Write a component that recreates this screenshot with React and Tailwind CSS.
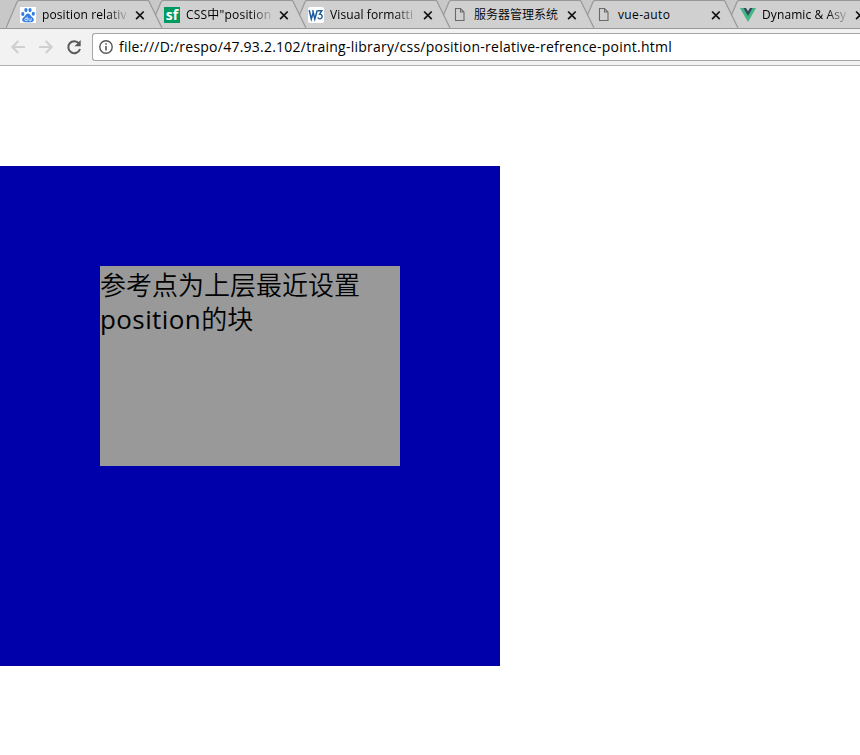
import React from "react";

function BaiduIcon() {
  return (
    <svg width="16" height="16" viewBox="0 0 16 16">
      <rect width="16" height="16" fill="#fff" />
      <g fill="#2f7de8">
        <ellipse cx="2.8" cy="7" rx="1.6" ry="2" />
        <ellipse cx="5.9" cy="3.1" rx="1.600" ry="2.1" />
        <ellipse cx="10" cy="3.1" rx="1.600" ry="2.1" />
        <ellipse cx="13.3" cy="6.8" rx="1.600" ry="2" />
        <path d="M8 6.6c1.6 0 2.2 1.5 3.4 2.8 1.2 1.2 2.6 1.9 2.4 3.7-.2 1.6-1.6 2.2-3 2.1H5.2c-1.4 0-2.8-.6-3-2.1-.2-1.800 1.200-2.500 2.400-3.700C5.800 8.100 6.400 6.600 8 6.600z" />
      </g>
      <path d="M7.200 9.500v4.200H6a1.200 1.200 0 0 1 0-2.500h1M8.900 11v2.100q0 .6.700.6h1.500V11" fill="none" stroke="#fff" strokeWidth=".8" />
    </svg>
  );
}

function SfIcon() {
  return (
    <div className="flex h-4 w-4 items-center justify-center bg-[#009a61] font-['Open_Sans','Noto_Sans',sans-serif] text-[14px] leading-4 font-bold text-white">
      sf
    </div>
  );
}

function W3Icon() {
  return (
    <div className="flex h-4 w-4 items-center justify-center rounded-[2px] bg-white">
      <svg width="16" height="16" viewBox="0 0 16 16" fill="none" stroke="#1c5c9c">
        <path d="M1.200 3.200 3.300 12 5.300 5M4.700 3.200 6.800 12 9.300 3.200" strokeWidth="1.500" />
        <path d="M9.800 3.800h4l-2.300 3.300c3.600-.2 3.300 4.900.3 4.800-1 0-1.700-.6-2-1.500" strokeWidth="1.400" />
      </svg>
    </div>
  );
}

function FileIcon() {
  return (
    <svg width="16" height="16" viewBox="0 0 16 16" fill="none" stroke="#6a6a6a" strokeWidth="1.100">
      <path d="M1.500 1.500h5l3.500 3.500v8.500h-8.500zM6.500 1.500v3.500h3.500" />
    </svg>
  );
}

function VueIcon() {
  return (
    <svg width="16" height="16" viewBox="0 0 16 16">
      <path d="M0 1h16L8 15z" fill="#41b883" />
      <path d="M3.400 1h9.200L8 9z" fill="#35495e" />
      <path d="M6 1h4L8 4.300z" fill="#d0d0d0" />
    </svg>
  );
}

const tabs = [
  { title: "position relativ", Icon: BaiduIcon, z: "z-[6]", text: "tracking-[0.1px]", fade: true },
  { title: 'CSS中"position', Icon: SfIcon, z: "z-[5]", text: "tracking-[0.2px]", fade: true },
  { title: "Visual formatti", Icon: W3Icon, z: "z-[4]", text: "tracking-[0.1px]", fade: true },
  { title: "服务器管理系统", Icon: FileIcon, z: "z-[3]", text: "font-[350]", fade: false },
  { title: "vue-auto", Icon: FileIcon, z: "z-[2]", text: "tracking-[0.35px]", fade: false },
  { title: "Dynamic & Asy", Icon: VueIcon, z: "z-[1]", text: "tracking-[0.1px]", fade: true },
];

function Tab({ title, Icon, z, text, fade }) {
  const isFile = Icon === FileIcon;
  return (
    <div className={`relative flex h-[29px] w-36 shrink-0 items-center pl-[14px] ${z}`}>
      <svg className="absolute top-0 left-0 -z-10" width="158" height="29" viewBox="0 0 158 29">
        <path d="M0 28 11 2Q12 .5 13.500 .5H141Q142.500 .5 143.300 2L156 28z" fill="#d0d0d0" />
        <path d="M0 28 11 2Q12 .5 13.500 .5H141Q142.500 .5 143.300 2L156 28" fill="none" stroke="#989898" strokeWidth="1.200" />
      </svg>
      <span className={isFile ? "w-4 pt-px pl-[2px]" : "w-4"}>
        <Icon />
      </span>
      <span
        className={`ml-[6px] w-[86px] text-[12px] leading-[18px] whitespace-nowrap ${text} ${
          fade ? "[mask-image:linear-gradient(to_right,#000_65px,transparent_88px)]" : ""
        }`}
      >
        {title}
      </span>
      <svg className="ml-[7px] shrink-0" width="10" height="10" viewBox="0 0 10 10" stroke="#111" strokeWidth="1.700">
        <path d="M1.100 1.500 8.700 9.100M8.700 1.500 1.100 9.100" />
      </svg>
    </div>
  );
}

function Toolbar() {
  return (
    <div className="flex h-[37px] items-center border-b border-[#b0b0b0] bg-[#f2f2f2] pl-[10px]">
      <svg width="16" height="16" viewBox="0 0 16 16" fill="none" stroke="#cfcfcf" strokeWidth="2">
        <path d="M15 8H2.500M8.300 2 2.300 8l6 6" />
      </svg>
      <svg className="ml-3" width="16" height="16" viewBox="0 0 16 16" fill="none" stroke="#cfcfcf" strokeWidth="2">
        <path d="M1 8h12.500M7.700 2l6 6-6 6" />
      </svg>
      <svg className="ml-3" width="16" height="16" viewBox="0 0 16 16" fill="none">
        <path d="M13 4.400A6 6 0 1 0 14 10" stroke="#5a5a5a" strokeWidth="2" />
        <path d="M14.700 1v6.200H8.500z" fill="#5a5a5a" />
      </svg>
      <div className="ml-[10px] flex h-[28px] flex-1 items-center rounded-l-[3px] border border-r-0 border-[#a6a6a6] bg-white pl-[6px]">
        <svg width="14" height="14" viewBox="0 0 14 14" fill="none" stroke="#555" strokeWidth="1.400">
          <circle cx="7" cy="7" r="6.200" />
          <path d="M7 6v4.500M7 3.300v1.500" strokeWidth="1.600" />
        </svg>
        <span className="ml-[6px] text-[14px] leading-[20px] tracking-[0.24px] whitespace-nowrap">
          file:///D:/respo/47.93.2.102/traing-library/css/position-relative-refrence-point.html
        </span>
      </div>
    </div>
  );
}

export default function App() {
  return (
    <div className="h-[755px] w-[860px] overflow-hidden bg-white font-['Open_Sans','Noto_Sans_CJK_SC',sans-serif] text-black">
      <div className="isolate flex h-[29px] overflow-hidden border-b border-[#989898] bg-[#c8c8c8] pl-[6px]">
        {tabs.map((tab) => (
          <Tab key={tab.title} {...tab} />
        ))}
      </div>
      <Toolbar />
      <main className="pt-[100px]">
        <div className="h-[500px] w-[500px] bg-[#0000aa] p-[100px]">
          <div className="h-[200px] w-[300px] bg-[#999999] pt-[2px] text-[26px] leading-[34px]">
            <span className="font-[350]">参考点为上层最近设置</span>
            <br />
            <span className="tracking-[0.4px]">position</span>
            <span className="font-[350]">的块</span>
          </div>
        </div>
      </main>
    </div>
  );
}
